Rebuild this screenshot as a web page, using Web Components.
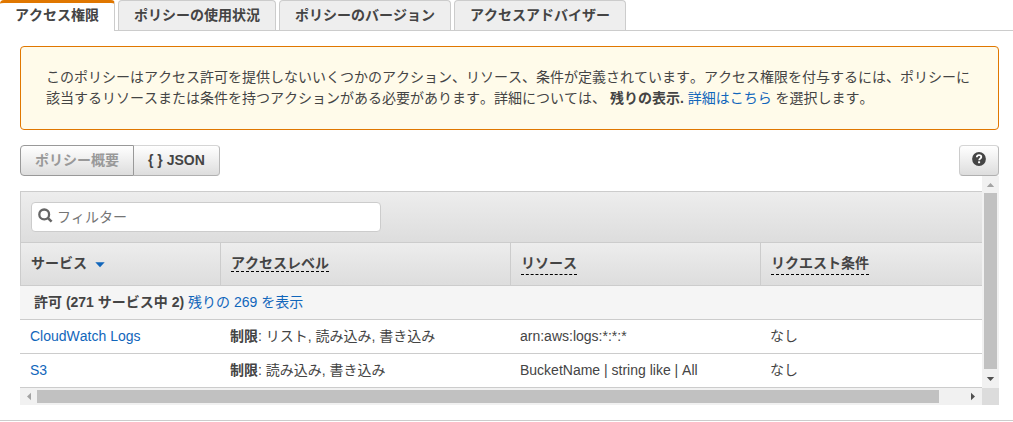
<!DOCTYPE html>
<html lang="ja">
<head>
<meta charset="utf-8">
<title>アクセス権限</title>
<style>
html,body{margin:0;background:#fff}
body{height:422px;overflow:hidden;font:14px/21px "Liberation Sans","Noto Sans CJK JP",sans-serif;font-kerning:none;color:#444}
</style>
</head>
<body>
<policy-page></policy-page>
<script>
const define = (name, html) => customElements.define(name, class extends HTMLElement {
  constructor() {
    super();
    const t = document.createElement('template');
    t.innerHTML = html;
    this.attachShadow({mode: 'open'}).append(t.content.cloneNode(true));
  }
});

define('policy-tab', `<style>
:host{display:block;box-sizing:border-box;height:30px;padding:4px 15px 0;margin-right:3px;border:1px solid #ccc;border-bottom:0;border-radius:4px 4px 0 0;background:#eee;font-weight:700;color:#444;white-space:nowrap}
:host([active]){height:31px;background:#fff;border-left:0;border-top:3px solid #e07700;padding-top:2px}
</style><slot></slot>`);

define('policy-tabs', `<style>
:host{display:flex;height:31px;background:linear-gradient(#ccc,#ccc) 0 30px/100% 1px no-repeat}
</style><slot></slot>`);

define('policy-alert', `<style>
:host{display:block;box-sizing:border-box;height:84px;margin:15px 14px 0 20px;padding:20px 0 0 25px;border:1px solid #e07700;border-radius:4px;background:#fffbea;white-space:nowrap}
</style><slot></slot>`);

define('text-link', `<style>:host{display:inline;color:#1166bb}</style><slot></slot>`);

define('push-button', `<style>
:host{display:flex;box-sizing:border-box;height:31px;padding:0 14px;align-items:center;justify-content:center;border:1px solid;border-color:#d5d5d5 #b8b8b8 #b0b0b0 #ccc;border-radius:4px;background:linear-gradient(#fff,#ddd);font-weight:700;white-space:nowrap}
:host([first]){border-color:#999;border-radius:4px 0 0 4px;color:#999}
:host([last]){border-left:0;border-radius:0 4px 4px 0}
:host([icon]){width:40px;padding:0 0 3px}
</style><slot></slot>`);

define('help-icon', `<style>:host{display:block;width:14px;height:14px}svg{display:block}</style>
<svg width="14" height="14" viewBox="0 0 14 14"><circle cx="7" cy="7" r="6.9" fill="#444"/><path d="M4.8 5.3C4.9 3.8 5.8 3.2 7 3.2c1.4 0 2.3.8 2.3 1.9C9.3 6.6 7.2 6.5 7.2 8.2" fill="none" stroke="#fff" stroke-width="1.8"/><rect x="6.1" y="9.3" width="2" height="1.9" fill="#fff"/></svg>`);

define('search-icon', `<style>:host{display:block;width:15px;height:15px}svg{display:block}</style>
<svg width="15" height="15" viewBox="0 0 15 15" fill="none" stroke="#666"><circle cx="6.2" cy="6.4" r="4.9" stroke-width="2.3"/><path d="M9.7 9.9l3.9 3.7" stroke-width="2.6"/></svg>`);

define('filter-box', `<style>
:host{display:flex;box-sizing:border-box;width:350px;height:30px;padding:0 0 0 6px;align-items:center;gap:4px;border:1px solid #ccc;border-radius:4px;background:#fff;color:#757575}
search-icon{margin-top:-3px}
</style><search-icon></search-icon><slot></slot>`);

define('header-cell', `<style>
:host{display:block;box-sizing:border-box;height:42px;padding:10px 0 0 10px;border-left:1px solid #ccc;font-weight:700;white-space:nowrap}
span{display:inline-block;height:21px}
:host([hint]) span{height:18px;border-bottom:1px dashed #000}
:host([hint=low]) span{height:21px}
</style><span><slot></slot></span>`);

define('sort-mark', `<style>:host{display:inline-block;margin-left:8px;width:10px;height:7px}svg{display:block}</style>
<svg width="10" height="7" viewBox="0 0 10 7"><path d="M.3 1.2H9.7L5 6.2Z" fill="#1166bb"/></svg>`);

define('table-row', `<style>
:host{display:grid;grid-template-columns:200px 290px 250px 222px;box-sizing:border-box;height:34px;padding:6px 0 0 10px;border-bottom:1px solid #ccc;white-space:nowrap}
:host([group]){display:block;background:#f5f5f5;padding-left:14px}
:host([head]){height:43px;padding:0;background:linear-gradient(#ededed,#ddd)}
</style><slot></slot>`);

define('scroll-bar', `<style>
:host{display:flex;align-items:center;background:#f1f1f1;box-sizing:border-box}
:host([dir=v]){flex-direction:column;width:17px;height:212px}
:host([dir=h]){width:962px;height:17px}
.a{flex:none;width:17px;height:17px}
.t{background:#c1c1c1}
.s{flex:1}
:host([dir=v]) .t{width:13px;height:176px}
:host([dir=h]) .t{width:902px;height:13px}
:host([dir=h]) .a{transform:rotate(-90deg)}
.e{transform:rotate(180deg)}
:host([dir=h]) .e{transform:rotate(90deg)}
</style>
<svg class="a" viewBox="0 0 17 17"><path d="M4.8 11L8.5 7L12.2 11Z" fill="#a3a3a3"/></svg><div class="t"></div><div class="s"></div>
<svg class="a e" viewBox="0 0 17 17"><path d="M4.8 11L8.5 7L12.2 11Z" fill="#505050"/></svg>`);

define('policy-table', `<style>
:host{display:grid;grid-template:212px 17px/962px 17px;margin-left:20px}
.view{padding-top:15px}
.tools{box-sizing:border-box;height:52px;padding:10px;border:1px solid #ccc;border-right:0;background:linear-gradient(#ededed,#ddd)}
.corner{background:#dcdcdc}
b{font-weight:700}
</style>
<div class="view">
<div class="tools"><filter-box>フィルター</filter-box></div>
<table-row head><header-cell>サービス<sort-mark></sort-mark></header-cell><header-cell hint>アクセスレベル</header-cell><header-cell hint="low">リソース</header-cell><header-cell hint="low">リクエスト条件</header-cell></table-row>
<table-row group><b>許可 (271 サービス中 2)</b> <text-link>残りの 269 を表示</text-link></table-row>
<table-row><text-link>CloudWatch Logs</text-link><div><b>制限</b>: リスト, 読み込み, 書き込み</div><div>arn:aws:logs:*:*:*</div><div>なし</div></table-row>
<table-row><text-link>S3</text-link><div><b>制限</b>: 読み込み, 書き込み</div><div>BucketName | string like | All</div><div>なし</div></table-row>
</div>
<scroll-bar dir="v"></scroll-bar><scroll-bar dir="h"></scroll-bar><div class="corner"></div>`);

define('policy-page', `<style>
:host{display:block;box-sizing:border-box;width:1013px;height:421px;border-bottom:1px solid #ccc}
.bar{display:flex;margin:15px 14px 0 20px}
.bar push-button[icon]{margin-left:auto}
</style>
<policy-tabs><policy-tab active>アクセス権限</policy-tab><policy-tab>ポリシーの使用状況</policy-tab><policy-tab>ポリシーのバージョン</policy-tab><policy-tab>アクセスアドバイザー</policy-tab></policy-tabs>
<policy-alert>このポリシーはアクセス許可を提供しないいくつかのアクション、リソース、条件が定義されています。アクセス権限を付与するには、ポリシーに<br>該当するリソースまたは条件を持つアクションがある必要があります。詳細については、 <b>残りの表示.</b> <text-link>詳細はこちら</text-link> を選択します。</policy-alert>
<div class="bar"><push-button first>ポリシー概要</push-button><push-button last>{ } JSON</push-button><push-button icon><help-icon></help-icon></push-button></div>
<policy-table></policy-table>`);
</script>
</body>
</html>
